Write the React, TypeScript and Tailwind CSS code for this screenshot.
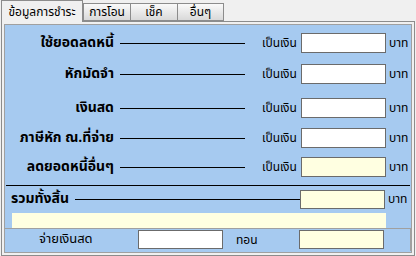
import React from "react";

const font = "font-['Tahoma','Noto_Sans_Thai','Loma','DejaVu_Sans',sans-serif]";

function AmountRow({ label, yellow, mt }: { label: string; yellow?: boolean; mt: string }) {
  return (
    <div className={`flex items-center h-[20px] ${mt}`}>
      <div className="w-[108px] flex justify-end text-[14px] font-bold leading-none whitespace-nowrap">{label}</div>
      <div className="ml-[6px] w-[125px] h-px bg-black" />
      <div className="ml-[17px] w-[36px] text-[12px] leading-none whitespace-nowrap">เป็นเงิน</div>
      <div
        className={`ml-[3px] w-[85px] h-[20px] border border-[#6b6b6b] ${yellow ? "bg-[#ffffe1]" : "bg-white"}`}
      />
      <div className="ml-[3px] text-[12px] leading-none">บาท</div>
    </div>
  );
}

export default function App() {
  return (
    <div className={`w-[416px] h-[256px] bg-[#f0f0f0] text-black overflow-hidden ${font}`}>
      {/* tabs */}
      <div className="flex items-end h-[21px] pl-[1px]">
        <div className="relative z-10 -mb-px h-[22px] w-[82px] border border-b-0 border-[#8c8c8c] bg-[#f0f0f0] flex items-center justify-center text-[12px]">
          ข้อมูลการชำระ
        </div>
        <div className="h-[18px] w-[48px] border border-[#8c8c8c] bg-gradient-to-b from-[#fafafa] to-[#d9d9d9] flex items-center justify-center text-[12px]">
          การโอน
        </div>
        <div className="h-[18px] w-[47px] border border-l-0 border-[#8c8c8c] bg-gradient-to-b from-[#fafafa] to-[#d9d9d9] flex items-center justify-center text-[12px]">
          เช็ค
        </div>
        <div className="h-[18px] w-[46px] border border-l-0 border-[#8c8c8c] bg-gradient-to-b from-[#fafafa] to-[#d9d9d9] flex items-center justify-center text-[12px]">
          อื่นๆ
        </div>
      </div>

      {/* frame */}
      <div className="ml-[1px] w-[414px] h-[235px] border border-[#8c8c8c] p-[2px]">
        <div className="h-full border border-[#a0a0a0] bg-[#a6caf0] flex flex-col">
          <div className="pl-[1px]">
            <AmountRow label="ใช้ยอดลดหนี้" mt="mt-[8px]" />
            <AmountRow label="หักมัดจำ" mt="mt-[11px]" />
            <AmountRow label="เงินสด" mt="mt-[14px]" />
            <AmountRow label="ภาษีหัก ณ.ที่จ่าย" mt="mt-[10px]" />
            <AmountRow label="ลดยอดหนี้อื่นๆ" yellow mt="mt-[9px]" />
          </div>

          <div className="mt-[8px] mx-[1px] h-px bg-black" />

          <div className="flex items-center h-[19px] mt-[4px] pl-[6px]">
            <div className="text-[14px] font-bold leading-none whitespace-nowrap">รวมทั้งสิ้น</div>
            <div className="ml-[6px] flex-1 h-px bg-black" />
            <div className="w-[85px] h-[19px] border border-[#6b6b6b] bg-[#ffffe1]" />
            <div className="ml-[3px] mr-[3px] w-[20px] text-[12px] leading-none">บาท</div>
          </div>

          <div className="mt-[4px] ml-[7px] w-[374px] h-[15px] bg-[#ffffe1]" />

          <div className="mt-auto mb-px border-t border-[#a0a0a0] border-r h-[24px] flex items-center">
            <div className="ml-[34px] w-[60px] text-[13px] leading-none whitespace-nowrap">จ่ายเงินสด</div>
            <div className="ml-[39px] w-[85px] h-[19px] border border-[#6b6b6b] bg-white" />
            <div className="ml-[13px] w-[30px] text-[12px] leading-none">ทอน</div>
            <div className="ml-[33px] w-[85px] h-[19px] border border-[#6b6b6b] bg-[#ffffe1]" />
          </div>
        </div>
      </div>
    </div>
  );
}
